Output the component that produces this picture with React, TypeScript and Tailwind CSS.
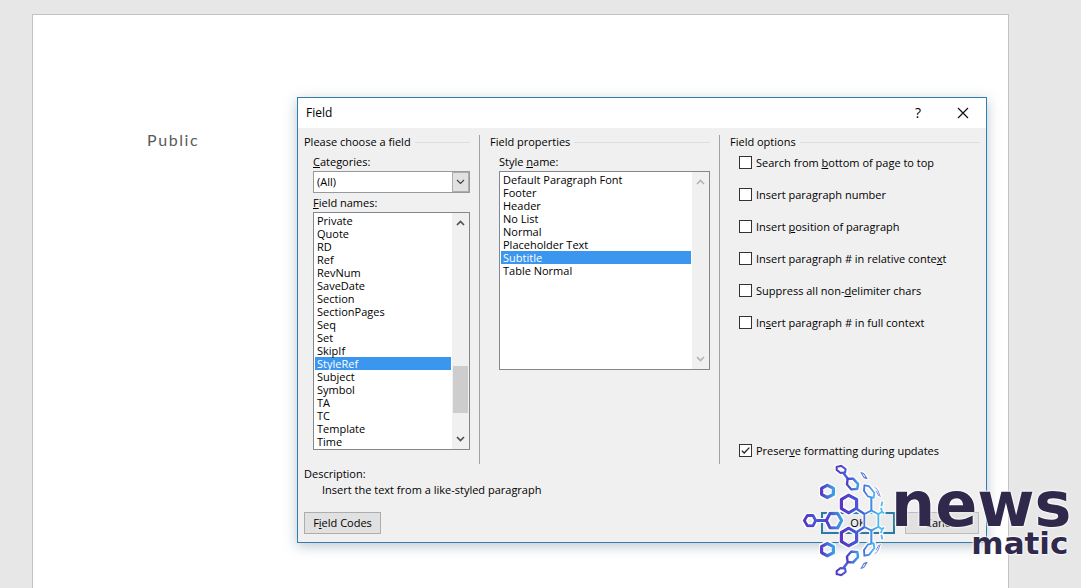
import { useState, type ReactNode } from "react";

const fieldNames = [
  "Private", "Quote", "RD", "Ref", "RevNum", "SaveDate", "Section", "SectionPages", "Seq",
  "Set", "SkipIf", "StyleRef", "Subject", "Symbol", "TA", "TC", "Template", "Time",
];

const styleNames = [
  "Default Paragraph Font", "Footer", "Header", "No List", "Normal", "Placeholder Text",
  "Subtitle", "Table Normal",
];

const options: ReactNode[] = [
  <>Search from <u>b</u>ottom of page to top</>,
  <>Insert para<u>g</u>raph number</>,
  <>Insert <u>p</u>osition of paragraph</>,
  <>Insert paragraph # in relative conte<u>x</u>t</>,
  <>Suppress all non-<u>d</u>elimiter chars</>,
  <>In<u>s</u>ert paragraph # in full context</>,
];

function Chevron({ up = false, thin = false }: { up?: boolean; thin?: boolean }) {
  return (
    <svg viewBox="0 0 9 6" className="h-[6px] w-[9px]" fill="none" stroke="currentColor" strokeWidth={thin ? 1.1 : 1.7}>
      <path d={up ? "M1 5 4.5 1.5 8 5" : "M1 1 4.5 4.5 8 1"} />
    </svg>
  );
}

function GroupTitle({ children }: { children: ReactNode }) {
  return (
    <div className="flex h-[14px] items-center gap-1">
      <h2>{children}</h2>
      <span className="h-px flex-1 bg-[#dedede]" />
    </div>
  );
}

function ListBox({
  items, initial, labelledBy, muted = false, className,
}: {
  items: string[]; initial: string; labelledBy: string; muted?: boolean; className: string;
}) {
  const [selected, setSelected] = useState(initial);
  return (
    <div className={`flex border border-[#828790] bg-white ${className}`}>
      <ul role="listbox" tabIndex={0} aria-labelledby={labelledBy} className="flex-1 p-px outline-none">
        {items.map((item) => (
          <li
            key={item}
            role="option"
            aria-selected={item === selected}
            onClick={() => setSelected(item)}
            className={`h-[13px] cursor-default pl-[2px] leading-[13px] ${item === selected ? "bg-[#3a96ee] text-white" : ""}`}
          >
            {item}
          </li>
        ))}
      </ul>
      <div className={`flex w-[17px] flex-col items-center bg-[#f0f0f0] py-[7px] pr-px ${muted ? "text-[#b4b4b4]" : "text-[#505050]"}`}>
        <Chevron up />
        {!muted && <span className="mt-[140px] h-[47px] w-[15px] bg-[#cdcdcd]" />}
        <span className="flex-1" />
        <Chevron />
      </div>
    </div>
  );
}

function CheckOption({ children, defaultChecked = false }: { children: ReactNode; defaultChecked?: boolean }) {
  return (
    <label className="flex h-[14px] items-start gap-1 whitespace-nowrap">
      <span className="grid">
        <input
          type="checkbox"
          defaultChecked={defaultChecked}
          className="peer col-start-1 row-start-1 size-[13px] appearance-none border border-[#333] bg-white"
        />
        <svg
          viewBox="0 0 13 13"
          className="pointer-events-none invisible col-start-1 row-start-1 size-[13px] peer-checked:visible"
          fill="none" stroke="#222" strokeWidth="1.3"
        >
          <path d="M2.8 6.6 5.2 9 10.3 3.6" />
        </svg>
      </span>
      <span>{children}</span>
    </label>
  );
}

function FieldDialog() {
  return (
    <section
      role="dialog"
      aria-labelledby="dialog-title"
      className="absolute top-[97px] left-[297px] w-[690px] border border-[#2f7fae] bg-[#f0f0f0] text-[11px] leading-[14px] text-black shadow-[0_3px_12px_rgba(60,90,120,0.35)]"
    >
      <header className="flex h-[30px] items-center bg-white pr-[17px] pl-2">
        <h1 id="dialog-title" className="flex-1 text-[12px]">Field</h1>
        <button type="button" aria-label="Help" className="mr-[34px] w-[10px] text-[14px]">?</button>
        <button type="button" aria-label="Close">
          <svg viewBox="0 0 12 12" className="size-3" stroke="#111" strokeWidth="1.2">
            <path d="M1 1 11 11M11 1 1 11" />
          </svg>
        </button>
      </header>

      <div className="px-[6px] pt-[7px] pb-2">
        <div className="flex h-[329px]">
          <div className="flex w-[176px] flex-col border-r border-[#a0a0a0] pr-[9px]">
            <GroupTitle>Please choose a field</GroupTitle>
            <div className="flex flex-col pt-[6px] pl-[9px]">
              <label htmlFor="categories"><u>C</u>ategories:</label>
              <div className="mt-[2px] grid h-[22px] border border-[#999]">
                <select id="categories" className="col-start-1 row-start-1 appearance-none bg-white pl-[3px]">
                  <option>(All)</option>
                </select>
                <span className="pointer-events-none col-start-1 row-start-1 grid w-[17px] place-items-center justify-self-end border border-[#adadad] bg-[#e1e1e1] text-[#404040]">
                  <Chevron thin />
                </span>
              </div>
              <span id="field-names" className="mt-[3px]"><u>F</u>ield names:</span>
              <ListBox items={fieldNames} initial="StyleRef" labelledBy="field-names" className="mt-[2px] h-[238px]" />
            </div>
          </div>

          <div className="flex w-[240px] flex-col border-r border-[#a0a0a0] pr-[9px] pl-[10px]">
            <GroupTitle>Field properties</GroupTitle>
            <div className="flex flex-col pt-[6px] pl-[9px]">
              <span id="style-name">Style <u>n</u>ame:</span>
              <ListBox items={styleNames} initial="Subtitle" labelledBy="style-name" muted className="mt-[2px] h-[199px]" />
            </div>
          </div>

          <div className="flex flex-1 flex-col pb-[6px] pl-[10px]">
            <GroupTitle>Field options</GroupTitle>
            <div className="flex flex-1 flex-col gap-[18px] pt-[7px] pl-[9px]">
              {options.map((option, i) => <CheckOption key={i}>{option}</CheckOption>)}
              <div className="mt-auto">
                <CheckOption defaultChecked>Preser<u>v</u>e formatting during updates</CheckOption>
              </div>
            </div>
          </div>
        </div>

        <h2 className="mt-[3px]">Description:</h2>
        <p className="mt-[2px] pl-[18px]">Insert the text from a like-styled paragraph</p>

        <footer className="mt-[15px] flex gap-[10px] pr-px">
          <button type="button" className="h-[22px] w-[77px] border border-[#adadad] bg-[#e1e1e1]">F<u>i</u>eld Codes</button>
          <span className="flex-1" />
          <button type="button" className="h-[22px] w-[74px] border-2 border-[#2b7ba5] bg-[#e8eaeb]">OK</button>
          <button type="button" className="h-[22px] w-[74px] border border-[#bdbdbd] bg-[#e1e1e1]">Cancel</button>
        </footer>
      </div>
    </section>
  );
}

function HalfGlobe() {
  return (
    <g fill="none" strokeLinejoin="round">
      <path d="M125 20 139 17 152 27 150 37 136 38 125 29Z" stroke="url(#violet)" strokeWidth="7" />
      <path d="M145 38 160 58" stroke="#3f62d8" strokeWidth="8" />
      <path d="M158 56 174 55 189 71 187 86 169 88 156 73Z" stroke="url(#blue)" strokeWidth="8" />
      <path d="M97 75 115 84V103L97 112 80 103V84Z" stroke="url(#blue)" strokeWidth="10" />
      <path d="M161 105 185 118V144L161 158 139 145V118Z" stroke="url(#violet)" strokeWidth="10" />
      <path d="M185 146 208 161" stroke="#4168d8" strokeWidth="8" />
      <path d="M198 37 206 40 216 55 207 52Z" stroke="#5b7fdc" strokeWidth="4" />
      <path d="M208 75 222 78 238 98 236 113 219 109 207 92Z" stroke="url(#cyan)" strokeWidth="6" />
      <path d="M229 113V151" stroke="#3f92e4" strokeWidth="7" />
      <path d="M239 81 248 89 256 110M243 92 252 108" stroke="#7874dc" strokeWidth="3" />
      <path d="M250 162 261 155 258 143M261 155 268 160M259 138 262 124" stroke="#50bdf0" strokeWidth="6" />
    </g>
  );
}

function Watermark() {
  return (
    <div className="pointer-events-none absolute top-[460px] left-[795px] flex font-['DejaVu_Sans',sans-serif] font-bold text-[#31294b]">
      <svg viewBox="0 0 330 362" className="h-[121px] w-[110px] shrink-0">
        <defs>
          <linearGradient id="violet"><stop stopColor="#5934c2" /><stop offset="1" stopColor="#4658d8" /></linearGradient>
          <linearGradient id="blue"><stop stopColor="#543cc8" /><stop offset="1" stopColor="#39a0e8" /></linearGradient>
          <linearGradient id="cyan"><stop stopColor="#4674dc" /><stop offset="1" stopColor="#43baf0" /></linearGradient>
          <filter id="halo" x="-10%" y="-10%" width="120%" height="120%">
            <feMorphology in="SourceAlpha" operator="dilate" radius="3" />
            <feGaussianBlur stdDeviation="2" result="spread" />
            <feFlood floodColor="#fff" />
            <feComposite in2="spread" operator="in" result="glow" />
            <feMerge><feMergeNode in="glow" /><feMergeNode in="SourceGraphic" /></feMerge>
          </filter>
        </defs>
        <g filter="url(#halo)">
          <HalfGlobe />
          <g transform="matrix(1 0 0 -1 0 362)"><HalfGlobe /></g>
          <g fill="none" strokeLinejoin="round">
            <path d="M37 166H54L62 181 54 197H37L28 181Z" stroke="url(#violet)" strokeWidth="9" />
            <path d="M64 181H94" stroke="#4557d4" strokeWidth="9" />
            <path d="M105 160H128L140 181 128 203H105L94 181Z" stroke="url(#blue)" strokeWidth="10" />
            <path d="M229 151 250 162V200L229 211 208 200V162Z" stroke="url(#cyan)" strokeWidth="6" />
          </g>
        </g>
      </svg>
      <div className="-ml-[14px] flex flex-col items-end [text-shadow:0_0_2px_white,0_0_2px_white,0_0_3px_white]">
        <span className="mt-[14px] text-[62px] leading-[62px]">news</span>
        <span className="-mt-[9px] pr-[3px] text-[31px] leading-[32px]">matic</span>
      </div>
    </div>
  );
}

export default function App() {
  return (
    <main className="relative flex min-h-screen overflow-hidden bg-[#e7e7e7] pt-[14px] pr-[72px] pl-8 font-['Open_Sans','Noto_Sans',sans-serif]">
      <article className="flex-1 border border-b-0 border-[#c3c3c3] bg-white pt-[113px] pl-[114px]">
        <p className="font-['Lato',sans-serif] text-[16px] leading-6 tracking-widest text-[#5a5a5a]">Public</p>
      </article>
      <FieldDialog />
      <Watermark />
    </main>
  );
}
